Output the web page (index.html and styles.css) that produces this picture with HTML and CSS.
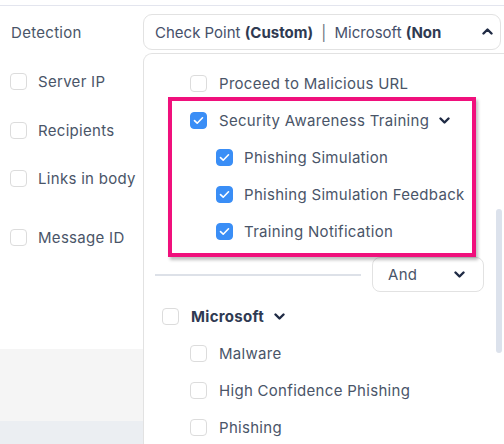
FILE: index.html
```html
<!DOCTYPE html>
<html>
<head>
<meta charset="utf-8">
<link rel="stylesheet" href="styles.css">
</head>
<body>
<div class="page">
  <div class="topline"></div>
  <div class="detect-row">
    <div class="detect-label">Detection</div>
    <div class="select-head">
      <span class="sel-text">Check Point <b>(Custom)</b> <span class="sep">|</span> Microsoft <b>(None)</b></span>
      <svg class="caret-up" width="11" height="8" viewBox="0 0 11 8"><path d="M1.5 6.5 L5.5 2.5 L9.5 6.5" fill="none" stroke="#1f2a44" stroke-width="2.4" stroke-linecap="round" stroke-linejoin="round"/></svg>
    </div>
  </div>
  <div class="content">
    <div class="left">
      <div class="lrow r1"><span class="cb"></span><span>Server IP</span></div>
      <div class="lrow r2"><span class="cb"></span><span>Recipients</span></div>
      <div class="lrow r3"><span class="cb"></span><span>Links in body</span></div>
      <div class="lrow r4"><span class="cb"></span><span>Message ID</span></div>
      <div class="spacer"></div>
      <div class="band1"></div>
      <div class="band2"></div>
    </div>
    <div class="panel">
      <div class="prow lvl1"><span class="cb"></span><span>Proceed to Malicious URL</span></div>
      <div class="prow lvl1"><span class="cb on"><svg width="11" height="9" viewBox="0 0 11 9"><path d="M1.5 4.6 L4.2 7.2 L9.5 1.8" fill="none" stroke="#fff" stroke-width="1.6" stroke-linecap="round" stroke-linejoin="round"/></svg></span><span>Security Awareness Training</span><svg class="chev" width="11" height="8" viewBox="0 0 11 8"><path d="M1.5 1.5 L5.5 5.5 L9.5 1.5" fill="none" stroke="#1f2a44" stroke-width="2.4" stroke-linecap="round" stroke-linejoin="round"/></svg></div>
      <div class="prow lvl2"><span class="cb on"><svg width="11" height="9" viewBox="0 0 11 9"><path d="M1.5 4.6 L4.2 7.2 L9.5 1.8" fill="none" stroke="#fff" stroke-width="1.6" stroke-linecap="round" stroke-linejoin="round"/></svg></span><span>Phishing Simulation</span></div>
      <div class="prow lvl2"><span class="cb on"><svg width="11" height="9" viewBox="0 0 11 9"><path d="M1.5 4.6 L4.2 7.2 L9.5 1.8" fill="none" stroke="#fff" stroke-width="1.6" stroke-linecap="round" stroke-linejoin="round"/></svg></span><span>Phishing Simulation Feedback</span></div>
      <div class="prow lvl2"><span class="cb on"><svg width="11" height="9" viewBox="0 0 11 9"><path d="M1.5 4.6 L4.2 7.2 L9.5 1.8" fill="none" stroke="#fff" stroke-width="1.6" stroke-linecap="round" stroke-linejoin="round"/></svg></span><span>Training Notification</span></div>
      <div class="divrow">
        <div class="divline"></div>
        <div class="and-sel"><span>And</span><svg width="11" height="8" viewBox="0 0 11 8"><path d="M1.5 1.5 L5.5 5.5 L9.5 1.5" fill="none" stroke="#1f2a44" stroke-width="2.4" stroke-linecap="round" stroke-linejoin="round"/></svg></div>
      </div>
      <div class="prow lvl0"><span class="cb"></span><span class="bold">Microsoft</span><svg class="chev" width="11" height="8" viewBox="0 0 11 8"><path d="M1.5 1.5 L5.5 5.5 L9.5 1.5" fill="none" stroke="#1f2a44" stroke-width="2.4" stroke-linecap="round" stroke-linejoin="round"/></svg></div>
      <div class="prow lvl1"><span class="cb"></span><span>Malware</span></div>
      <div class="prow lvl1"><span class="cb"></span><span>High Confidence Phishing</span></div>
      <div class="prow lvl1"><span class="cb"></span><span>Phishing</span></div>
      <div class="highlight"></div>
      <div class="thumb"></div>
    </div>
  </div>
</div>
</body>
</html>
```

FILE: styles.css
```css
html, body {
  margin: 0;
  padding: 0;
  background: #fff;
}
body {
  width: 504px;
  height: 444px;
  overflow: hidden;
  font-family: Inter, "Noto Sans", "Liberation Sans", sans-serif;
  font-size: 15px;
  letter-spacing: 0.3px;
  color: #4a5568;
}
.page {
  display: flex;
  flex-direction: column;
  height: 444px;
}
.topline {
  height: 5px;
  border-bottom: 1px solid #e3e5ee;
  flex: 0 0 auto;
}
.detect-row {
  display: flex;
  align-items: center;
  margin-top: 8px;
  height: 36px;
  flex: 0 0 auto;
}
.detect-label {
  width: 132px;
  padding-left: 11px;
}
.select-head {
  box-sizing: border-box;
  width: 358px;
  height: 36px;
  border: 1px solid #e2e2e2;
  border-radius: 9px;
  display: flex;
  align-items: center;
  padding-left: 11px;
  padding-right: 11px;
  position: relative;
  overflow: hidden;
}
.sel-text {
  white-space: nowrap;
  overflow: hidden;
  width: 286px;
  flex: 0 0 286px;
  letter-spacing: 0;
  color: #46506a;
}
.sel-text b {
  font-weight: 700;
  color: #2f3a52;
}
.sep {
  color: #6b7280;
  margin: 0 4px;
}
.caret-up {
  margin-left: auto;
  margin-right: -4px;
  margin-bottom: 2px;
}
.content {
  display: flex;
  flex: 1 1 auto;
  margin-top: 3px;
  min-height: 0;
}
.left {
  width: 143px;
  flex: 0 0 143px;
  display: flex;
  flex-direction: column;
}
.lrow {
  display: flex;
  align-items: center;
  gap: 11px;
  padding-left: 10px;
  height: 20px;
}
.r1 { margin-top: 18px; }
.r2 { margin-top: 29px; }
.r3 { margin-top: 28px; }
.r4 { margin-top: 39px; }
.spacer { flex: 1 1 auto; }
.band1 { height: 72px; background: #f5f5f5; }
.band2 { height: 23px; background: #ebeef2; }
.cb {
  box-sizing: border-box;
  width: 17px;
  height: 17px;
  flex: 0 0 17px;
  border: 1px solid #dcdcdc;
  border-radius: 4px;
  background: #fff;
  display: flex;
  align-items: center;
  justify-content: center;
}
.cb.on {
  background: #3a8ef6;
  border-color: #3a8ef6;
}
.panel {
  position: relative;
  box-sizing: border-box;
  width: 370px;
  flex: 0 0 370px;
  border: 1px solid #e2e2e2;
  border-right: none;
  border-bottom: none;
  border-top-left-radius: 9px;
  padding-top: 11px;
  display: flex;
  flex-direction: column;
}
.prow {
  display: flex;
  align-items: center;
  height: 37px;
  flex: 0 0 37px;
  gap: 12px;
  white-space: nowrap;
}
.lvl0 { padding-left: 18px; }
.lvl1 { padding-left: 46px; }
.lvl2 { padding-left: 72px; gap: 11px; }
.chev { margin-left: -2px; margin-top: 1px; }
.bold { font-weight: 700; color: #2f3a52; }
.divrow {
  height: 48px;
  flex: 0 0 48px;
  display: flex;
  align-items: center;
  padding-left: 11px;
  gap: 11px;
}
.divline {
  width: 206px;
  height: 2px;
  background: #dde1e8;
  margin-top: 1px;
}
.and-sel {
  box-sizing: border-box;
  width: 112px;
  height: 35px;
  border: 1px solid #e2e2e2;
  border-radius: 8px;
  display: flex;
  align-items: center;
  justify-content: space-between;
  padding: 0 18px 0 15px;
  margin-top: 1px;
}
.highlight {
  position: absolute;
  left: 24px;
  top: 43px;
  width: 308px;
  height: 160px;
  box-sizing: border-box;
  border: 4px solid #f0107c;
  box-shadow: 2px 3px 3px rgba(0, 0, 0, 0.25);
  pointer-events: none;
}
.thumb {
  position: absolute;
  left: 352px;
  top: 155px;
  width: 6px;
  height: 144px;
  border-radius: 3px;
  background: #dce2ec;
}
```
